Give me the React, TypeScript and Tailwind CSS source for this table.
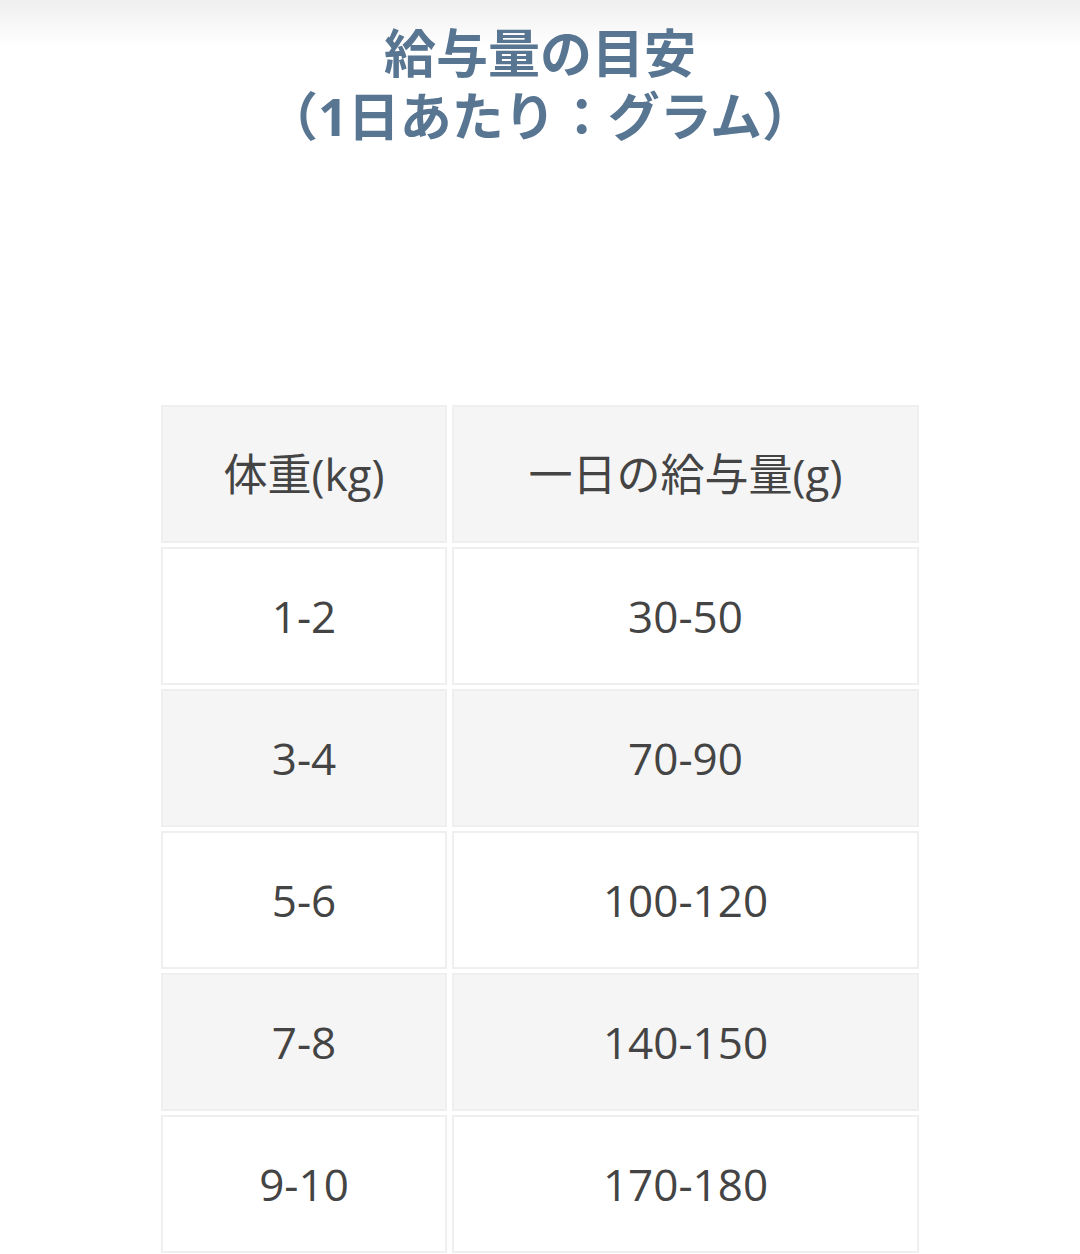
import React from "react"

const rows = [
  { weight: "1-2", amount: "30-50" },
  { weight: "3-4", amount: "70-90" },
  { weight: "5-6", amount: "100-120" },
  { weight: "7-8", amount: "140-150" },
  { weight: "9-10", amount: "170-180" },
]

export default function App() {
  const cell =
    "h-[138px] flex items-center justify-center border-2 border-[#efefef] text-[44px] leading-none text-[#444444]"

  return (
    <div
      className="min-h-screen bg-white bg-[linear-gradient(to_bottom,#efefef,#ffffff_48px)]"
      style={{ fontFamily: '"Open Sans", "Noto Sans CJK JP", sans-serif' }}
    >
      {/* タイトル */}
      <h1 className="pt-[21px] text-center font-bold text-[52px] leading-[63px] text-[#587592]">
        <span className="block">給与量の目安</span>
        <span className="block">（1日あたり：グラム）</span>
      </h1>

      {/* 給与量テーブル */}
      <div className="mt-[258px] mx-auto w-[758px] grid grid-cols-[286px_467px] gap-x-[5px] gap-y-[4px]">
        <div className={`${cell} bg-[#f5f5f5]`}>体重(kg)</div>
        <div className={`${cell} bg-[#f5f5f5]`}>一日の給与量(g)</div>
        {rows.map((r, i) => (
          <React.Fragment key={r.weight}>
            <div className={`${cell} ${i % 2 === 1 ? "bg-[#f5f5f5]" : "bg-white"}`}>{r.weight}</div>
            <div className={`${cell} ${i % 2 === 1 ? "bg-[#f5f5f5]" : "bg-white"}`}>{r.amount}</div>
          </React.Fragment>
        ))}
      </div>
    </div>
  )
}
